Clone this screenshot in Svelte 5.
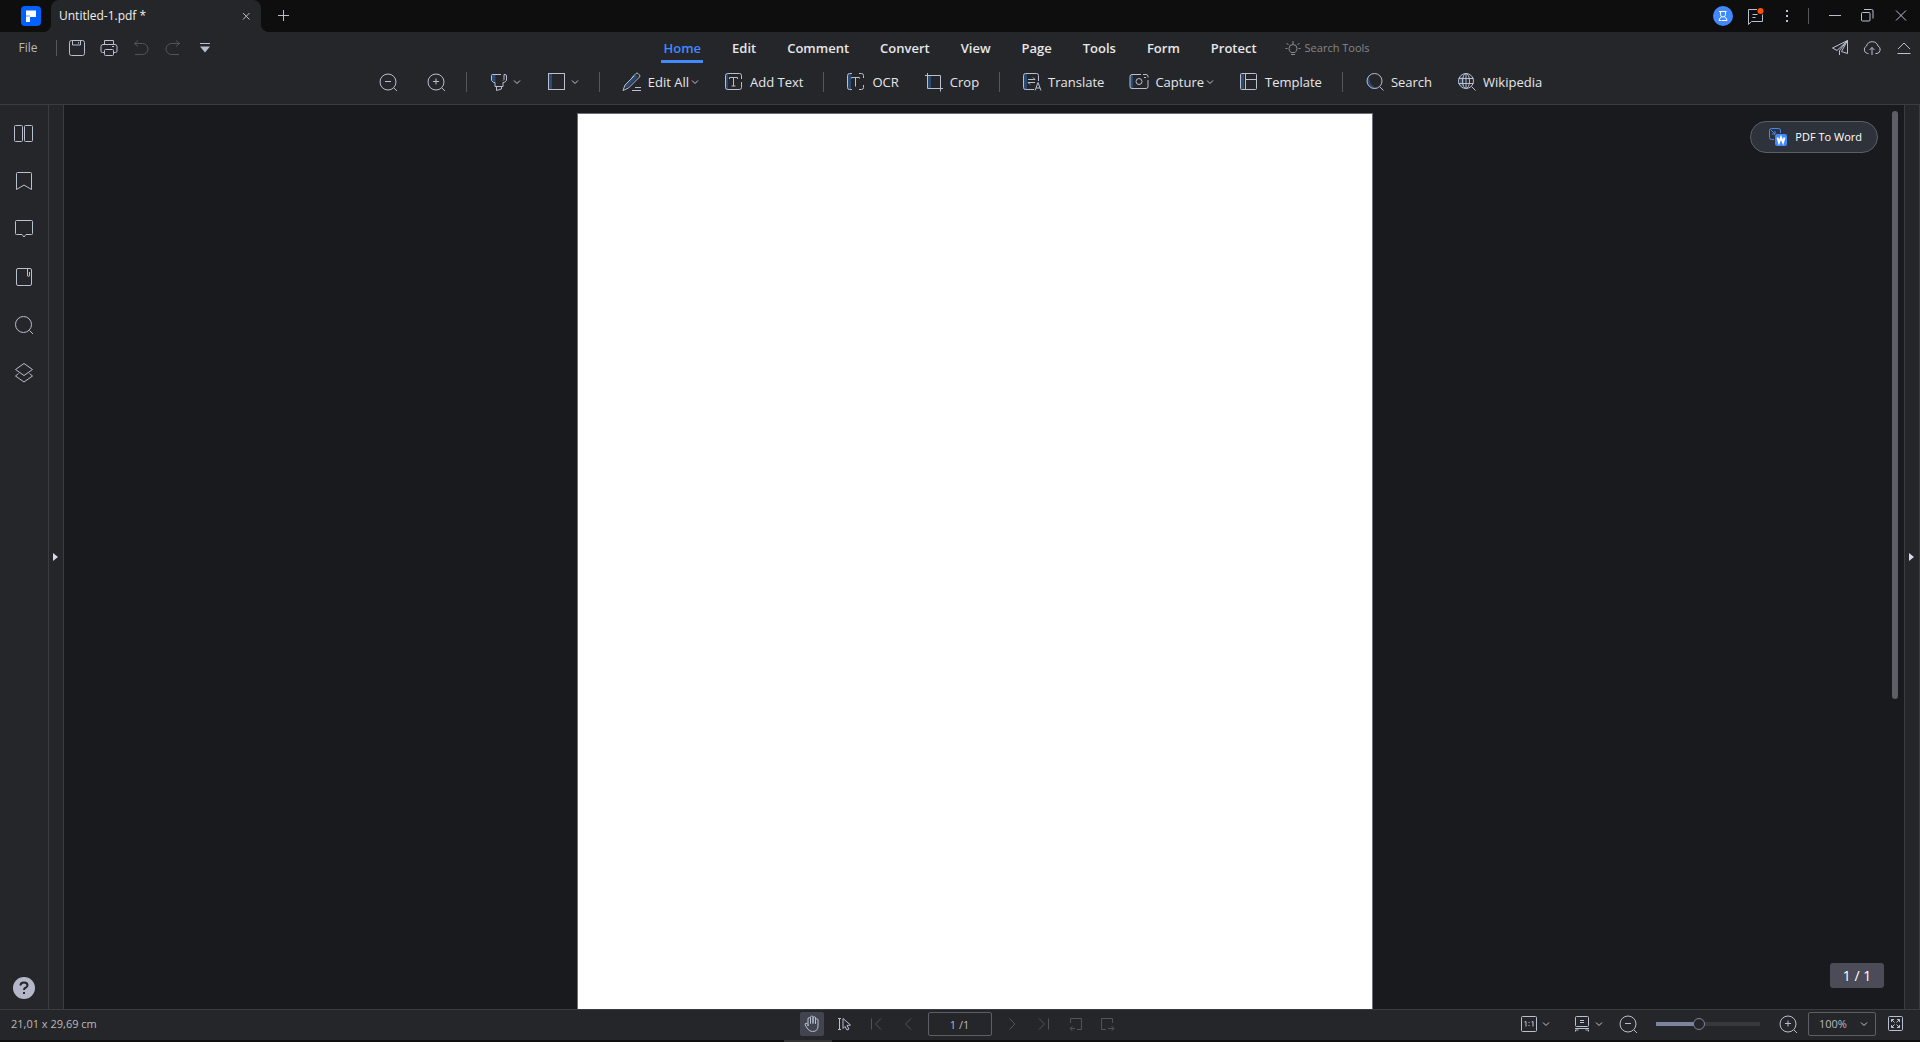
<script>
  let zoom = $state(40);
  let activeTab = $state('Home');

  const tabs = ['Home', 'Edit', 'Comment', 'Convert', 'View', 'Page', 'Tools', 'Form', 'Protect'];

  const icons = {
    save: '<rect x="2.5" y="2.5" width="15" height="15" rx="2"/><path d="M5.5 2.5v4.500h8v-4.500M11.500 4v1.500"/>',
    print: '<path d="M5.500 6.500v-4h9v4M5.500 14.500h-2q-1.500 0-1.500-1.500v-4.500q0-2 2-2h12q2 0 2 2v4.500q0 1.500-1.500 1.500h-2M13 8.500h2"/><rect x="5.500" y="11.500" width="9" height="6" rx="1"/>',
    undo: '<path d="M7 2.500l-3.500 3L7 8.500M3.500 5.500h8a5 5 0 0 1 0 11h-7.500"/>',
    redo: '<path d="M13 2.500l3.500 3L13 8.500M16.500 5.500h-8a5 5 0 0 0 0 11h7.500"/>',
    more: '<path d="M5 5.500h10"/><path class="solid" d="M5 8.500h10l-5 6z"/>',
    zoomOut: '<circle cx="10" cy="10" r="8"/><path d="M16 16l3 3M7 9.500h6"/>',
    zoomIn: '<circle cx="10" cy="10" r="8"/><path d="M16 16l3 3M7 9.500h6M10 6.500v6"/>',
    marker: '<path class="tint" d="M2.500 2.500h4v8h-2l-2-2z"/><path d="M12 2.500H3.500q-1 0-1 1v5l2 2h1.500v4h8v-4h1l2.500-2v-4.500q0-1.500-1.500-1.500h-1v5l-1 1M7.500 14.500v4l5-1.500v-2.500"/>',
    shape: '<rect class="tint" x="2" y="2" width="3" height="16"/><rect x="1.500" y="1.500" width="16" height="16"/>',
    edit: '<path class="tint" d="M2 14L13 2.500l3 2L5 16z"/><path d="M10 5.500l4-4q1-1 2 0l1.500 1.500q1 1 0 2l-11 11-5.500 2.500 2-5.500 9-9M13 15.500h6M10 18.500h9"/>',
    text: '<path class="tint" d="M2 2h2v16H2z"/><path d="M17.500 7V3.500q0-2-2-2h-12q-2 0-2 2v12q0 2 2 2h12q2 0 2-2V10M5.500 7V5.500h8V7M9.500 5.500v8.500M7.500 14h4"/>',
    ocr: '<path class="tint" d="M2 2h3v15H2z"/><path d="M6 1.500H3.500q-2 0-2 2v12q0 2 2 2H6M13 1.500h2.500q2 0 2 2V6M13 17.500h2.500q2 0 2-2V13M5.500 6.500v-1h8v1M9.500 5.500v9"/>',
    crop: '<path class="tint" d="M4 4h3v12H4z"/><path d="M1 3.500h15.500V19.500M3.500 1v15.500H19"/>',
    translate: '<path class="tint" d="M2 2h3v16H2z"/><path d="M16.500 9V3.500q0-2-2-2h-11q-2 0-2 2v12q0 2 2 2H12M6 7.500h7l-2-2M13 10.500H6l2 2M13 18.500l3-8 3 8M14 16h4"/>',
    capture: '<path class="tint" d="M1 3h3v14H1z"/><path d="M12 2.500H3q-2 0-2 2v10q0 2 2 2h14q2 0 2-2V8M14 2.500h3q2 0 2 2v1M15 5.500h2"/><circle cx="10" cy="9.500" r="3"/>',
    template: '<path class="tint" d="M2 2h3v15H2z"/><rect x="1.500" y="1.500" width="16" height="16" rx="1"/><path d="M6.500 1.500v16M6.500 7.500h11"/>',
    search: '<path class="tint" d="M4 4a8 8 0 0 0 9 12.500C7 15 4.500 11 4 4z"/><circle cx="9.500" cy="9" r="7.500"/><path d="M15 15l3.500 3.500"/>',
    wiki: '<path class="tint" d="M3 5h4v9H3z"/><circle cx="9" cy="9" r="7.500"/><ellipse cx="9" cy="9" rx="3.500" ry="7.500"/><path d="M1.500 6.500h15M1.500 11.500h15M9 1.500v15M14.500 14.500l4 4"/>',
    bulb: '<path d="M10 3v3M3.500 5l2 2M16.500 5l-2 2M2.500 10.500h2M15.500 10.500h2M8 14.500q-2-1.500-2-4a4 4 0 0 1 8 0q0 2.500-2 4zM8 16.500h4"/>',
    send: '<path d="M17.500 2.500L2.500 10l4.500 2.500zM17.500 2.500v13l-6-2zM17.500 2.500L9.500 12.500V17"/>',
    cloud: '<path d="M6.500 15.500h-1a4 4 0 0 1-1-7.500 6 6 0 0 1 11.500 0 4 4 0 0 1-1 7.500h-1.500M10 17V9.500M7.500 12l2.500-2.500 2.500 2.500"/>',
    collapse: '<path d="M4 11l6-6 6 6M3.500 15.500h13"/>',
    message: '<path d="M12 3.500H3.500v15l3-3h11V8.500M7.500 8.500h5M7.500 11.500h3"/><circle class="alert" cx="15.500" cy="5" r="3"/>',
    dots: '<path class="solid" d="M9 4h2v2H9zM9 9h2v2H9zM9 14h2v2H9z"/>',
    minimize: '<path d="M4 9.500h12"/>',
    restore: '<rect x="4.500" y="6.500" width="8.500" height="8.500" rx="1"/><path d="M7 3.500h7.500q1.500 0 1.500 1.500v7.500"/>',
    close: '<path d="M5 4.500l10 10M15 4.500l-10 10"/>',
    closeTab: '<path d="M7 7l6.500 6.500M13.500 7L7 13.500"/>',
    plus: '<path d="M5 9.500h11M10.500 4v11"/>',
    thumbs: '<rect x="0.500" y="2.500" width="8" height="16" rx="1"/><rect x="10.500" y="2.500" width="8" height="16" rx="1"/>',
    bookmark: '<path d="M2.500 18.500v-16q0-1 1-1h13q1 0 1 1v16l-7.500-4.500z"/>',
    comment: '<path d="M2.500 1.500h15q1 0 1 1v12q0 1-1 1H12l-2 2.500-2-2.500H2.500q-1 0-1-1v-12q0-1 1-1z"/>',
    attach: '<rect x="2.500" y="1.500" width="15" height="17" rx="1.500"/><path d="M13.500 2v6q0 1.500 1 1.500t1-1.500V5"/>',
    find: '<circle cx="9.500" cy="9.500" r="8"/><path d="M15.500 15.500l3.500 3.500"/>',
    layers: '<path d="M10 .5l8.500 6-8.500 6-8.500-6zM4.500 10.500l-3 2.500 8.500 6 8.500-6-3-2.500"/>',
    hand: '<path d="M6 12V5q0-1.500 1.300-1.500T8.500 5v4.500V3.500q0-1.500 1.200-1.500T11 3.500v6V4q0-1.300 1.200-1.300T13.500 4v6V6q0-1.200 1.200-1.200T16 6v6q0 5.500-5.500 5.500-3.500 0-5.500-3.500l-1.800-3q-.5-1.500.8-1.800t2 1.300z"/>',
    pointer: '<path d="M4 4.500h3M5.500 4.500v11M4 15.500h3M9 4.500l7.500 6.500-3.500.5 2 3.500-2 1-2-3.500-2 2z"/>',
    first: '<path d="M5.500 4.500v11M15 4.500L9.500 10l5.500 5.500"/>',
    prev: '<path d="M13 4.500L7.500 10l5.500 5.500"/>',
    next: '<path d="M7.500 4.500L13 10l-5.500 5.500"/>',
    last: '<path d="M5 4.500l5.500 5.500L5 15.500M14.500 4.500v11"/>',
    back: '<path d="M4.500 9V4.500h11v11H11M4.500 14.500H9M6.500 12.500l-2.500 2 2.500 2.500"/>',
    forward: '<path d="M14.500 9V4.500h-11v11H8M10 14.500h6M13.500 12l2.500 2.500-2.500 2.500"/>',
    actual: '<rect x="2.500" y="2.500" width="15" height="15" rx="1"/><path d="M5.500 8l1.500-.5v5M12.500 8l1.500-.5v5M10 8v1M10 11v1"/>',
    mode: '<rect x="3.500" y="2.500" width="13" height="10" rx="1"/><path d="M8 6.500h4M8 8.500h4M3 14.500h14M3.500 17.500v-1.500h3M16.500 17.500v-1.500h-3"/>',
    full: '<rect x="2.500" y="2.500" width="14" height="14" rx="1"/><path d="M5.500 8V5.500H8M5.500 5.500l3 3M11 5.500h2.500V8M13.500 5.500l-3 3M5.500 11v2.500H8M5.500 13.500l3-3M11 13.500h2.500V11M13.500 13.500l-3-3"/>'
  };

  const tools = [
    { icon: 'zoomOut', label: 'Zoom out' },
    { icon: 'zoomIn', label: 'Zoom in' },
    null,
    { icon: 'marker', label: 'Highlight', menu: true },
    { icon: 'shape', label: 'Shapes', menu: true },
    null,
    { icon: 'edit', text: 'Edit All', menu: true },
    { icon: 'text', text: 'Add Text' },
    null,
    { icon: 'ocr', text: 'OCR' },
    { icon: 'crop', text: 'Crop' },
    null,
    { icon: 'translate', text: 'Translate' },
    { icon: 'capture', text: 'Capture', menu: true },
    { icon: 'template', text: 'Template' },
    null,
    { icon: 'search', text: 'Search' },
    { icon: 'wiki', text: 'Wikipedia' }
  ];

  const rail = [
    ['thumbs', 'Thumbnails'],
    ['bookmark', 'Bookmarks'],
    ['comment', 'Comments'],
    ['attach', 'Attachments'],
    ['find', 'Search'],
    ['layers', 'Layers']
  ];
</script>

{#snippet icon(name)}
  <svg class="icon" viewBox="0 0 20 20" aria-hidden="true">{@html icons[name]}</svg>
{/snippet}

{#snippet chevron()}
  <svg class="chevron" viewBox="0 0 8 8" aria-hidden="true"><path d="M1 2.500l3 3 3-3" /></svg>
{/snippet}

<div class="app">
  <header class="titlebar">
    <svg class="logo" viewBox="0 0 20 20" aria-hidden="true">
      <rect width="20" height="20" rx="4" fill="#0061ff" />
      <path d="M5 4.500h10v6.500H9V16H5z" fill="#fff" />
      <path d="M5 9h4v2H5z" fill="#a9ccff" />
    </svg>
    <div class="doc-tab">
      <span>Untitled-1.pdf *</span>
      <button class="tab-close" aria-label="Close tab">{@render icon('closeTab')}</button>
    </div>
    <button class="cell new-tab" aria-label="New tab">{@render icon('plus')}</button>
    <div class="window-tools">
      <button class="cell" aria-label="Account">
        <svg class="icon avatar" viewBox="0 0 20 20" aria-hidden="true">
          <circle class="disc" cx="10" cy="10" r="10" />
          <path d="M6 5.500h7.500M7.500 5.500v3q0 2.500 2.500 2.500t2.500-2.500v-3M8.500 11q-2 .5-2.500 3.500h2.500M11.500 11q2 .5 2.500 3.500h-5" />
        </svg>
      </button>
      <button class="cell" aria-label="Messages">{@render icon('message')}</button>
      <button class="cell" aria-label="More">{@render icon('dots')}</button>
      <i class="divider short"></i>
      <button class="cell" aria-label="Minimize">{@render icon('minimize')}</button>
      <button class="cell" aria-label="Restore">{@render icon('restore')}</button>
      <button class="cell quit" aria-label="Close">{@render icon('close')}</button>
    </div>
  </header>

  <div class="ribbon">
    <div class="menu-row">
      <div class="quick">
        <button class="file">File</button>
        <i class="divider short"></i>
        <button class="cell" aria-label="Save">{@render icon('save')}</button>
        <button class="cell" aria-label="Print">{@render icon('print')}</button>
        <button class="cell" aria-label="Undo" disabled>{@render icon('undo')}</button>
        <button class="cell" aria-label="Redo" disabled>{@render icon('redo')}</button>
        <button class="cell" aria-label="Customize toolbar">{@render icon('more')}</button>
      </div>
      <nav class="tabs">
        {#each tabs as tab}
          <button class:active={tab === activeTab} onclick={() => (activeTab = tab)}>{tab}</button>
        {/each}
      </nav>
      <div class="menu-end">
        <label class="search-tools">
          {@render icon('bulb')}
          <input type="text" placeholder="Search Tools" aria-label="Search Tools" />
        </label>
        <div class="share">
          <button class="cell" aria-label="Share">{@render icon('send')}</button>
          <button class="cell" aria-label="Upload">{@render icon('cloud')}</button>
          <button class="cell" aria-label="Collapse ribbon">{@render icon('collapse')}</button>
        </div>
      </div>
    </div>
    <div class="toolbar">
      {#each tools as tool}
        {#if tool}
          <button class="tool" class:labelled={tool.text} aria-label={tool.text ?? tool.label}>
            {@render icon(tool.icon)}
            {#if tool.text}<span>{tool.text}</span>{/if}
            {#if tool.menu}{@render chevron()}{/if}
          </button>
        {:else}
          <i class="divider"></i>
        {/if}
      {/each}
    </div>
  </div>

  <main>
    <aside class="rail">
      {#each rail as [name, label]}
        <button aria-label={label}>{@render icon(name)}</button>
      {/each}
      <button class="help" aria-label="Help">
        <svg viewBox="0 0 22 22" aria-hidden="true">
          <circle cx="11" cy="11" r="11" />
          <path d="M7.500 8.500q0-3 3.500-3t3.500 2.800q0 1.700-2 2.500-1.500.6-1.500 2.200M11 15v2" />
        </svg>
      </button>
    </aside>
    <button class="handle" aria-label="Expand left panel"><i></i></button>
    <section class="canvas">
      <div class="page"></div>
      <i class="scrollbar"></i>
      <button class="to-word">
        <svg viewBox="0 0 18 18" aria-hidden="true">
          <path class="line" d="M5 11.500H2.500q-2 0-2-2v-7q0-2 2-2h7q2 0 2 2V5M2 2l4 4M6 3v3H3" />
          <rect x="6" y="6" width="12" height="12" rx="2" />
          <path class="mark" d="M8.500 9.500l1.500 5 2-5 2 5 1.500-5" />
        </svg>
        <span>PDF To Word</span>
      </button>
      <span class="badge">1 / 1</span>
    </section>
    <button class="handle right" aria-label="Expand right panel"><i></i></button>
  </main>

  <footer>
    <span class="size">21,01 x 29,69 cm</span>
    <div class="pager">
      <button class="on" aria-label="Hand">{@render icon('hand')}</button>
      <button aria-label="Select">{@render icon('pointer')}</button>
      <button aria-label="First page" disabled>{@render icon('first')}</button>
      <button aria-label="Previous page" disabled>{@render icon('prev')}</button>
      <input type="text" value="1 /1" aria-label="Page number" />
      <button aria-label="Next page" disabled>{@render icon('next')}</button>
      <button aria-label="Last page" disabled>{@render icon('last')}</button>
      <button aria-label="Previous view" disabled>{@render icon('back')}</button>
      <button aria-label="Next view" disabled>{@render icon('forward')}</button>
    </div>
    <div class="view">
      <button class="pick" aria-label="Page size">{@render icon('actual')}{@render chevron()}</button>
      <button class="pick" aria-label="Page layout">{@render icon('mode')}{@render chevron()}</button>
      <button aria-label="Zoom out">{@render icon('zoomOut')}</button>
      <input class="slider" type="range" min="0" max="100" bind:value={zoom} aria-label="Zoom" style="--fill: {zoom}%" />
      <button aria-label="Zoom in">{@render icon('zoomIn')}</button>
      <div class="zoom-level">
        <select aria-label="Zoom level"><option>100%</option></select>
        {@render chevron()}
      </div>
      <button aria-label="Full screen">{@render icon('full')}</button>
    </div>
  </footer>
  <div class="taskbar-edge"><i></i></div>
</div>

<style>
  :global(body) {
    background: #0e0e0e;
  }
  .app {
    display: flex;
    flex-direction: column;
    height: 100vh;
    color: #e6e7ea;
    background: #252629;
    font-family: 'Open Sans', 'Noto Sans', sans-serif;
    font-size: 12px;
    line-height: 16px;
    overflow: hidden;
  }
  .app :global(*) {
    box-sizing: border-box;
  }
  button {
    display: flex;
    align-items: center;
    justify-content: center;
    margin: 0;
    padding: 0;
    border: 0;
    background: none;
    color: inherit;
    font: inherit;
    white-space: nowrap;
  }
  button:disabled {
    opacity: 0.3;
  }
  input,
  select {
    margin: 0;
    padding: 0;
    border: 0;
    outline: 0;
    background: none;
    color: inherit;
    font: inherit;
  }
  .icon {
    display: block;
    flex: none;
    width: 20px;
    height: 20px;
    fill: none;
    stroke: #b9bed0;
    stroke-width: 1;
  }
  .icon :global(.tint) {
    fill: #2b4a72;
    stroke: none;
  }
  .icon :global(.solid) {
    fill: #b9bed0;
    stroke: none;
  }
  .icon :global(.alert) {
    fill: #ff5000;
    stroke: none;
  }
  .chevron {
    display: block;
    flex: none;
    width: 8px;
    height: 8px;
    fill: none;
    stroke: #c4c8d6;
  }
  .divider {
    flex: none;
    width: 1px;
    height: 20px;
    background: #55565c;
  }
  .divider.short {
    height: 16px;
  }
  .cell {
    flex: none;
    width: 32px;
    height: 32px;
  }

  .titlebar {
    display: flex;
    flex: none;
    align-items: center;
    height: 32px;
    padding: 0 3px 0 21px;
    background: #0e0e0e;
  }
  .logo {
    width: 20px;
    height: 20px;
  }
  .doc-tab {
    position: relative;
    display: flex;
    align-items: center;
    justify-content: space-between;
    width: 210px;
    height: 32px;
    margin-left: 10px;
    padding: 0 5px 0 8px;
    border-radius: 8px 8px 0 0;
    background: #252629;
    color: #f0f0f0;
  }
  .doc-tab::before,
  .doc-tab::after {
    content: '';
    position: absolute;
    bottom: 0;
    width: 8px;
    height: 8px;
  }
  .doc-tab::before {
    right: 100%;
    background: radial-gradient(circle at 0 0, transparent 8px, #252629 8px);
  }
  .doc-tab::after {
    left: 100%;
    background: radial-gradient(circle at 100% 0, transparent 8px, #252629 8px);
  }
  .new-tab {
    margin-left: 6px;
  }
  .window-tools {
    display: flex;
    align-items: center;
    margin-left: auto;
  }
  .window-tools .divider {
    margin: 0 10px 0 5px;
  }
  .window-tools .quit {
    margin-left: 2px;
  }
  .avatar {
    stroke: #fff;
  }
  .avatar .disc {
    fill: #4289ff;
    stroke: none;
  }

  .ribbon {
    flex: none;
    height: 73px;
    border-bottom: 1px solid #3b3c42;
  }
  .menu-row {
    display: grid;
    grid-template-columns: 1fr auto 1fr;
    align-items: center;
    height: 32px;
  }
  .quick {
    display: flex;
    align-items: center;
    height: 32px;
  }
  .file {
    width: 56px;
    height: 32px;
    color: #b8b8ba;
  }
  .quick .divider {
    margin-right: 4px;
  }
  .tabs {
    display: flex;
    gap: 27px;
    font-size: 13px;
    font-weight: 600;
  }
  .tabs button {
    height: 30px;
    padding: 3px 2px 0;
    border-bottom: 3px solid transparent;
  }
  .tabs .active {
    color: #4289ff;
    border-color: #4289ff;
  }
  .menu-end {
    display: flex;
    justify-content: space-between;
  }
  .search-tools {
    display: flex;
    align-items: center;
    gap: 2px;
    margin-left: 24px;
    color: #85868b;
    font-size: 11px;
  }
  .search-tools .icon {
    stroke: #8b8c92;
  }
  .search-tools input {
    width: 96px;
  }
  .search-tools input::placeholder {
    color: #85868b;
    opacity: 1;
  }
  .share {
    display: flex;
  }
  .toolbar {
    display: flex;
    align-items: center;
    justify-content: center;
    gap: 26px;
    height: 36px;
    font-size: 13px;
  }
  .toolbar .divider {
    margin: 0 -4px 0 -6px;
  }
  .tool {
    gap: 4px;
    height: 28px;
  }
  .tool:first-child {
    margin-right: 2px;
  }
  .tool.labelled {
    gap: 2px;
  }
  .tool.labelled + .tool.labelled {
    margin-left: -1px;
  }
  .tool.labelled .icon {
    margin-right: 4px;
  }

  main {
    display: flex;
    flex: 1;
    min-height: 0;
  }
  .rail {
    display: flex;
    flex-direction: column;
    align-items: center;
    width: 49px;
    padding: 4px 0 10px;
    border-right: 1px solid #3b3c42;
  }
  .rail button {
    width: 48px;
    height: 48px;
  }
  .rail .help {
    width: 22px;
    height: 22px;
    margin-top: auto;
  }
  .help svg {
    width: 22px;
    height: 22px;
    fill: #b3b7c8;
  }
  .help path {
    fill: none;
    stroke: #252629;
    stroke-width: 2;
  }
  .handle {
    flex: none;
    width: 15px;
    padding-right: 2px;
    border-right: 1px solid #3b3c42;
  }
  .handle.right {
    width: 16px;
    border-left: 1px solid #3b3c42;
  }
  .handle i {
    border: 4px solid transparent;
    border-left: 5px solid #d3d8ea;
    border-right: 0;
  }
  .canvas {
    position: relative;
    flex: 1;
    padding: 8px 18px 0 0;
    background: #191a1e;
    overflow: hidden;
  }
  .page {
    width: 796px;
    height: 1123px;
    margin: 0 auto;
    border: 1px solid #6b6c7c;
    background: #fff;
  }
  .scrollbar {
    position: absolute;
    top: 6px;
    right: 6px;
    width: 6px;
    height: 65%;
    border-radius: 3px;
    background: #5c5e68;
  }
  .to-word {
    position: absolute;
    top: 16px;
    right: 26px;
    gap: 8px;
    height: 32px;
    padding: 0 15px 0 18px;
    border: 1px solid #5c5f68;
    border-radius: 16px;
    background: #2e333b;
    color: #fff;
    font-size: 11px;
  }
  .to-word svg {
    width: 18px;
    height: 18px;
    fill: #4289ff;
  }
  .to-word .line {
    fill: none;
    stroke: #4289ff;
  }
  .to-word .mark {
    fill: none;
    stroke: #fff;
    stroke-width: 2;
  }
  .badge {
    position: absolute;
    right: 20px;
    bottom: 21px;
    width: 54px;
    border-radius: 3px;
    background: #4b4c57;
    color: #fff;
    font-size: 14px;
    line-height: 25px;
    text-align: center;
  }

  footer {
    display: grid;
    grid-template-columns: 1fr auto 1fr;
    flex: none;
    align-items: center;
    height: 31px;
    padding: 0 12px 2px 11px;
    border-top: 1px solid #3b3c42;
    color: #b9bac0;
  }
  .size {
    font-size: 11px;
  }
  .pager {
    display: flex;
    gap: 8px;
  }
  footer button {
    flex: none;
    width: 24px;
    height: 24px;
  }
  .pager .on {
    border-radius: 2px;
    background: #424550;
  }
  .pager input {
    width: 64px;
    height: 24px;
    border: 1px solid #5c5e68;
    border-radius: 2px;
    font-size: 11px;
    text-align: center;
  }
  .view {
    display: flex;
    align-items: center;
    justify-content: flex-end;
    gap: 8px;
  }
  footer .pick {
    gap: 3px;
    width: 31px;
    margin-right: 14px;
  }
  footer .pick + .pick {
    margin-right: 5px;
  }
  .slider {
    width: 104px;
    height: 16px;
    margin: 0 8px;
    appearance: none;
  }
  .slider::-webkit-slider-runnable-track {
    height: 4px;
    background: linear-gradient(to right, #7d849e var(--fill), #37383c var(--fill));
  }
  .slider::-webkit-slider-thumb {
    width: 12px;
    height: 12px;
    margin-top: -4px;
    border: 1px solid #7d849e;
    border-radius: 50%;
    background: #252629;
    appearance: none;
  }
  .zoom-level {
    display: flex;
    align-items: center;
    width: 68px;
    height: 24px;
    padding-right: 7px;
    border: 1px solid #5c5e68;
    border-radius: 2px;
  }
  .zoom-level select {
    flex: 1;
    min-width: 0;
    height: 22px;
    padding-left: 10px;
    font-size: 11px;
    appearance: none;
  }
  .taskbar-edge {
    display: flex;
    flex: none;
    justify-content: center;
    height: 2px;
    padding-right: 304px;
    background: #0e0e0e;
  }
  .taskbar-edge i {
    width: 48px;
    background: #333;
  }
</style>
